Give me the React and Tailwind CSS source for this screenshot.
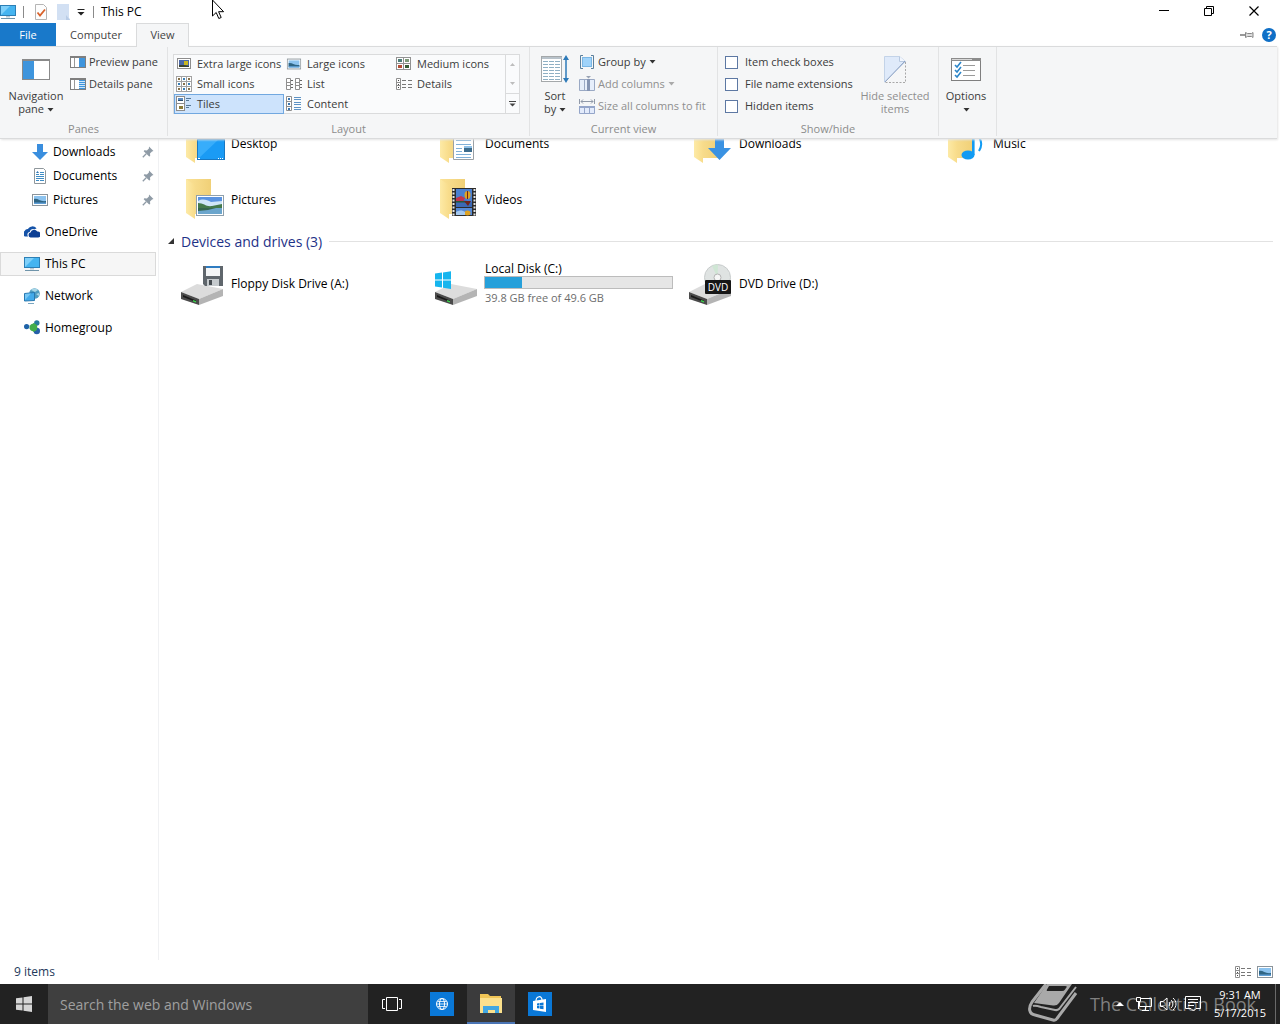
import React, { useState } from "react";

/* ---------- small icons (16px) ---------- */

const Svg = ({ w = 16, h = 16, className = "", children }) => (
  <svg width={w} height={h} viewBox={`0 0 ${w} ${h}`} className={`shrink-0 ${className}`} aria-hidden="true">
    {children}
  </svg>
);

const Caret = ({ color = "#333" }) => (
  <Svg w={7} h={4} className="inline-block align-middle">
    <path d="M0.5 0h6l-3 3.5z" fill={color} />
  </Svg>
);

const PcIcon = () => (
  <Svg>
    <rect x="0.5" y="1.5" width="15" height="10" fill="#45b4f0" stroke="#2c7fb5" />
    <path d="M1 11V2h9z" fill="#7fd0fa" />
    <path d="M6 12h4v1.5H6z" fill="#b9c8d2" />
    <path d="M1 14.5h14" stroke="#6f94aa" />
  </Svg>
);

const DownloadIcon = () => (
  <Svg>
    <path d="M5 0h6v8h5l-8 8-8-8h5z" fill="#3a8ede" />
  </Svg>
);

const DocumentIcon = () => (
  <Svg>
    <path d="M2.5 0.5h9l2 2v13h-11z" fill="#fff" stroke="#8f979c" />
    <path d="M8 4.5h4M4 6.5h3M8 6.5h4M4 8.5h8M4 10.5h8M4 12.5h3M8 12.5h4" stroke="#3f8cc4" />
    <path d="M4 5l1.5-2L7 5z" fill="#2c72b0" />
  </Svg>
);

const PictureIcon = ({ className }) => (
  <Svg className={className}>
    <rect x="0.5" y="2.5" width="15" height="11" fill="#fff" stroke="#8b949b" />
    <rect x="2" y="4" width="12" height="8" fill="#8cc3ef" />
    <path d="M2 7c4-1 6 3 12 2v2H2z" fill="#2f6584" />
    <path d="M2 10.5h12V12H2z" fill="#5f9fd6" />
  </Svg>
);

const OneDriveIcon = () => (
  <Svg>
    <path d="M1 12.500a3 3 0 0 1-.4-5.400A3.500 3.500 0 0 1 4 5a5 5 0 0 1 8.500-.5l-2 .8C8 4.500 6 6 5.800 8 3 8.500 3 11 4 12.500z" fill="#1553a8" />
    <path d="M6.500 13.500a2.500 2.500 0 0 1 0-4.900 3.700 3.700 0 0 1 6.800-1 2.700 2.700 0 0 1 .7 5.900z" fill="#0c3f94" />
  </Svg>
);

const NetworkIcon = () => (
  <Svg>
    <circle cx="10.500" cy="5.500" r="5.300" fill="#4f9cc0" />
    <path d="M7 2c2-2 5-2 7 0l-3 2zM12 6l3-1v3z" fill="#a9d6e6" />
    <path d="M0.500 5.500l10-1v8l-10 .5z" fill="#42aaea" stroke="#2878b0" />
    <path d="M1 12V6l6-.6z" fill="#76c7f5" />
    <path d="M4 15.500h6" stroke="#7aa6c0" />
  </Svg>
);

const HomegroupIcon = () => (
  <Svg>
    <path d="M3 7l9-4M3 7l10 5" stroke="#9cc7d8" strokeWidth="1" />
    <circle cx="12.800" cy="3" r="2.700" fill="#267a9c" />
    <circle cx="12.800" cy="11" r="3.200" fill="#2560a8" />
    <path d="M5.500 7l4-4 3 2v5l-3 2z" fill="#43ad49" />
    <circle cx="9.500" cy="7.500" r="3.800" fill="#43ad49" />
    <circle cx="2.600" cy="6.600" r="2.600" fill="#1e62a8" />
  </Svg>
);

const PushPin = () => (
  <Svg w={12} h={12} className="ml-px">
    <path d="M7 0.500l4.500 4.500-1.500.4-2 2 .2 2.600-1 .5L1.700 5.300l.6-1 2.600.2 2-2z" fill="#8f9ba6" />
    <path d="M4.200 7.800L0.800 11.200" stroke="#8f9ba6" strokeWidth="1.300" />
  </Svg>
);

/* ---------- ribbon icons ---------- */

const NavPaneIcon = () => (
  <Svg w={28} h={28}>
    <rect x="0.5" y="4.500" width="27" height="20" fill="#fff" stroke="#8a8a8a" />
    <path d="M0 4h28v2H0z" fill="#8a8a8a" />
    <path d="M1 6h11v18H1z" fill="#3f95dd" />
  </Svg>
);

const SidePaneIcon = ({ lines }) => (
  <Svg>
    <rect x="0.5" y="2.500" width="15" height="11" fill="#fff" stroke="#7f7f7f" />
    <path d="M0 2h16v2H0z" fill="#7f7f7f" />
    <path d="M4.500 4v9" stroke="#9a9a9a" />
    <path d="M9 4h6v9H9z" fill="#3f95dd" />
    {lines && <path d="M9 5.500h6M9 7.500h6M9 9.500h6M9 11.500h6" stroke="#cfe6f8" />}
  </Svg>
);

const ExtraLargeIcon = () => (
  <Svg>
    <rect x="1.500" y="2.500" width="13" height="10" fill="#fff" stroke="#8d8d8d" />
    <rect x="3" y="4" width="10" height="7" fill="#4a68a8" />
    <path d="M8 5h4v4H8z" fill="#c9b722" />
    <path d="M3 9h5l5 1v1H3z" fill="#3a4230" />
  </Svg>
);

const SmallGridIcon = () => (
  <Svg>
    {[0, 5, 10].map((y) =>
      [0, 5, 10].map((x) => (
        <g key={`${x}-${y}`}>
          <rect x={x + 0.5} y={y + 0.5} width="5" height="5" fill="#fff" stroke="#a2a2a2" />
          <rect x={x + 2} y={y + 2} width="2" height="2" fill={(x + y) % 10 ? "#397eb5" : "#857048"} />
        </g>
      ))
    )}
  </Svg>
);

const TilesIcon = () => (
  <Svg>
    <rect x="0.500" y="0.500" width="8" height="7" fill="#fff" stroke="#8d8d8d" />
    <rect x="0.500" y="7.500" width="8" height="7" fill="#fff" stroke="#8d8d8d" />
    <path d="M2 2h5v3H2z" fill="#5c8bc0" />
    <path d="M2 4h5v1H2z" fill="#2d4f70" />
    <path d="M3 10h4v3H3z" fill="#8a7b38" />
    <path d="M10 2.500h5M10 4.500h3M10 9.500h5M10 11.500h3" stroke="#557896" />
  </Svg>
);

const MediumIcon = () => (
  <Svg>
    {[[1, 2, "#4d7d78"], [8, 2, "#7d9a78"], [1, 8, "#b34c34"], [8, 8, "#355c33"]].map(([x, y, c]) => (
      <g key={`${x}-${y}`}>
        <rect x={x - 0.5} y={y - 0.5} width="7" height="6" fill="#fff" stroke="#929292" />
        <rect x={x + 1} y={y + 1} width="4" height="3" fill={c} />
      </g>
    ))}
  </Svg>
);

const ListIcon = () => (
  <Svg>
    {[0, 9].map((x) => (
      <g key={x}>
        <path d={`M${x + 0.5} 2.500h4v11h-4zM${x} 6.500h5M${x} 9.500h5`} fill="#fff" stroke="#8f8f8f" />
        <path d={`M${x + 5} 4.500h2M${x + 5} 8.500h2M${x + 5} 11.500h2`} stroke="#666" />
      </g>
    ))}
  </Svg>
);

const DetailsIcon = () => (
  <Svg>
    <path d="M0.500 2.500h4v11h-4zM0 6.500h5M0 9.500h5" fill="#fff" stroke="#8f8f8f" />
    <path d="M2 4h1v1H2zM2 8h1v1H2zM2 11h1v1H2z" fill="#444" />
    <path d="M6 4.500h4M6 8.500h4M6 11.500h4M12 4.500h4M12 8.500h4M12 11.500h4" stroke="#777" />
  </Svg>
);

const ContentIcon = () => (
  <Svg>
    <path d="M0.500 0.500h5v14h-5zM0 5.500h6M0 10.500h6" fill="#fff" stroke="#8f8f8f" />
    <path d="M2 2h2v2H2zM2 7h2v2H2zM2 12h2v2H2z" fill="#3a76b0" />
    <path d="M8 1.500h7M8 3.500h7M8 6.500h7M8 8.500h7M8 11.500h7M8 13.500h7" stroke="#5d92c4" />
  </Svg>
);

const SortIcon = () => (
  <Svg w={28} h={28}>
    <rect x="0.500" y="1.500" width="20" height="25" fill="#fff" stroke="#a4a8aa" />
    <path d="M1 2h20v2H1z" fill="#b8c2ca" />
    {[6.5, 9.5, 12.5, 15.5, 18.5, 21.5, 24.5].map((y) => (
      <path key={y} d={`M2 ${y}h5M8 ${y}h5M14 ${y}h5`} stroke="#8fb0c4" />
    ))}
    <path d="M25 3v22" stroke="#2e7ab8" strokeWidth="1.500" />
    <path d="M22 5l3-5 3 5zM22 23l3 5 3-5z" fill="#2e7ab8" />
  </Svg>
);

const GroupIcon = () => (
  <Svg>
    <path d="M4 1.500H1.500v13H4M12 1.500h2.500v13H12" fill="none" stroke="#5b7f9b" />
    <rect x="3.500" y="3.500" width="9" height="9" fill="#9fd3fa" stroke="#7ab6e4" />
  </Svg>
);

const AddColumnsIcon = () => (
  <Svg>
    <path d="M0.500 3.500h15v11h-15zM5.500 3v12M10.500 3v12" fill="#e6eefb" stroke="#9aa9c4" />
    <path d="M8 3h3v12H8z" fill="#8595b4" />
    <path d="M7 0h5L9.500 2.500z" fill="#9aa3b4" />
  </Svg>
);

const SizeColumnsIcon = () => (
  <Svg>
    <path d="M0.500 1v5M15.500 1v5M2 3.500h12M4 1.500l-2 2 2 2M12 1.500l2 2-2 2" fill="none" stroke="#9099a8" />
    <path d="M0.500 8.500h15v7h-15zM5.500 8v8M10.500 8v8" fill="#e3ebfb" stroke="#94a5c9" />
    <path d="M0 8h16v2H0z" fill="#94a5c9" />
  </Svg>
);

const HideIcon = () => (
  <Svg w={28} h={28}>
    <path d="M3.500 1.500h15l6 5L3.500 27z" fill="#dfeafa" stroke="#c3d3e8" />
    <path d="M18.500 1.500v5h6" fill="#f2f6fd" stroke="#b8c9e0" />
    <path d="M24.500 7v20.500H4" fill="none" stroke="#a8a8a8" strokeDasharray="2 1.500" />
    <path d="M4 27L24 6" stroke="#8fa3c4" />
  </Svg>
);

const OptionsIcon = () => (
  <Svg w={30} h={28}>
    <rect x="0.500" y="3.500" width="29" height="22" fill="#fff" stroke="#7f7f7f" />
    <path d="M0 3h30v3H0z" fill="#8c8c8c" />
    <path d="M1 4.500h20" stroke="#d8d8d8" />
    {[10, 15, 20].map((y) => (
      <g key={y} fill="none">
        <path d={`M4 ${y}l2 2 4-5`} stroke="#2d86c9" strokeWidth="1.600" />
        <path d={`M12 ${y + 0.5}h12`} stroke="#9a9a9a" />
      </g>
    ))}
  </Svg>
);

/* ---------- tile icons (48px) ---------- */

const Folder = ({ children }) => (
  <Svg w={48} h={48}>
    <defs>
      <linearGradient id="flap" x1="0" x2="1">
        <stop offset="0" stopColor="#fdeaa6" />
        <stop offset="1" stopColor="#f8dc8a" />
      </linearGradient>
      <linearGradient id="back" x1="0" x2="1">
        <stop offset="0" stopColor="#fbe296" />
        <stop offset="1" stopColor="#f0d077" />
      </linearGradient>
    </defs>
    <path d="M6 3h25v35H15z" fill="url(#back)" />
    <path d="M6 3l9 6v34l-9-6z" fill="url(#flap)" />
    {children}
  </Svg>
);

const DesktopFolder = () => (
  <Folder>
    <rect x="17.500" y="19.500" width="27" height="20" fill="#1a9bf5" stroke="#1778c4" />
    <path d="M18 39V20h20z" fill="#37adfb" />
    <path d="M18 38.500h2M38 38.500h1M40 38.500h1M42 38.500h1" stroke="#fff" />
  </Folder>
);

const DocumentsFolder = () => (
  <Folder>
    <path d="M19.500 12.500h20v27h-20z" fill="#fff" stroke="#9aa0a5" />
    <path d="M22 20.500h15M22 24.500h15M22 28.500h6M22 31.500h6M22 34.500h15M22 37.500h15" stroke="#7fb0d8" />
    <rect x="30" y="26" width="8" height="6" fill="#3d6c8c" />
    <path d="M30 26h8v2h-8z" fill="#8fc1e8" />
  </Folder>
);

const DownloadsFolder = () => (
  <Folder>
    <path d="M27 12h9v16h7L31.500 40 20 28h7z" fill="#3a92e2" />
  </Folder>
);

const MusicFolder = () => (
  <Folder>
    <ellipse cx="26" cy="35" rx="6.500" ry="4.600" fill="#129bf3" />
    <path d="M30 12h2.600v23H30z" fill="#129bf3" />
    <path d="M35 15c5 5 5 11 2 16" fill="none" stroke="#129bf3" strokeWidth="2" />
  </Folder>
);

const PicturesFolder = () => (
  <Folder>
    <rect x="16.500" y="19.500" width="27" height="20" fill="#fff" stroke="#8fa0ac" />
    <rect x="18" y="21" width="24" height="17" fill="#5a93e0" />
    <path d="M18 25c5-3 9-1 13 1l11-1v7H18z" fill="#cfe6f8" />
    <path d="M18 27c6 0 8 4 14 3l10-2v4H18z" fill="#44794b" />
    <path d="M18 32h24v6H18z" fill="#6ba5cc" />
    <path d="M18 32h18l-8 2-10 1z" fill="#35664f" />
  </Folder>
);

const VideosFolder = () => (
  <Folder>
    <rect x="18" y="12" width="24" height="28" fill="#2b2b2b" />
    <path d="M19.500 13v27M40.500 13v27" stroke="#e6e6e6" strokeWidth="2" strokeDasharray="2 1.500" />
    <rect x="22" y="13" width="16" height="18" fill="#4a7fd0" />
    <rect x="22" y="32" width="16" height="7" fill="#5589d6" />
    <path d="M22 25c4-2 8-1 16 1v5H22z" fill="#3b68b4" />
    <path d="M22 22l5-2 4 2-2 4h-7z" fill="#c2334e" />
    <path d="M22 25h14v1.500H22z" fill="#27593a" />
    <ellipse cx="33.500" cy="19" rx="3" ry="4" fill="#e0a321" />
    <path d="M33 15h1v8h-1zM30 25h7l-3 5z" fill="#6f231b" />
    <ellipse cx="33.500" cy="37" rx="3" ry="2.500" fill="#e0a321" />
    <path d="M22 36c4-2 6-2 9 0v3h-9z" fill="#a5c8ee" />
  </Folder>
);

const DriveBase = () => (
  <>
    <path d="M1 32l16-8 26 5-24 10z" fill="#dcdcdc" />
    <path d="M19 39l24-10v7L19 45z" fill="#b4b4b4" />
    <path d="M1 32l18 7v6L1 39z" fill="#4b4b4b" />
    <path d="M3 35l13 5.500v1.500L3 37z" fill="#191919" />
    <path d="M13 40l3 1v1.500l-3-1z" fill="#3dd14c" />
  </>
);

const FloppyDrive = () => (
  <Svg w={48} h={48}>
    <DriveBase />
    <path d="M23 6h20v20H25l-2-2z" fill="#5f666c" />
    <path d="M26 6h14v10H26z" fill="#f3f5f6" />
    <path d="M26 6h14v2H26z" fill="#2e7cc1" />
    <path d="M27 19h12v7H27z" fill="#c5cacd" />
    <path d="M29 20h3v5h-3z" fill="#454b50" />
  </Svg>
);

const LocalDrive = () => (
  <Svg w={48} h={48}>
    <DriveBase />
    <path d="M1 13.500l7-1v7H1zM9 12.400l8-1.200v8.300H9zM1 20.500h7v7l-7-1zM9 20.500h8V29l-8-1.300z" fill="#16b5ee" />
  </Svg>
);

const DvdDrive = () => (
  <Svg w={48} h={48}>
    <DriveBase />
    <circle cx="29.500" cy="17.500" r="13" fill="#dfe3e2" stroke="#c8cccc" />
    <path d="M29.500 17.500L24 6a13 13 0 0 1 6-1.500z" fill="#cfe6d4" />
    <circle cx="29.500" cy="17.500" r="3.500" fill="#f6f6f6" stroke="#b4b4b4" />
    <rect x="17" y="20" width="26" height="14" rx="1" fill="#161616" />
    <text x="30" y="31" fill="#fff" fontSize="10" textAnchor="middle" fontFamily="Open Sans">DVD</text>
  </Svg>
);

/* ---------- data ---------- */

const layouts = [
  { name: "Extra large icons", icon: <ExtraLargeIcon /> },
  { name: "Large icons", icon: <PictureIcon className="scale-90" /> },
  { name: "Medium icons", icon: <MediumIcon /> },
  { name: "Small icons", icon: <SmallGridIcon /> },
  { name: "List", icon: <ListIcon /> },
  { name: "Details", icon: <DetailsIcon /> },
  { name: "Tiles", icon: <TilesIcon /> },
  { name: "Content", icon: <ContentIcon /> },
];

const folders = [
  { name: "Desktop", icon: <DesktopFolder /> },
  { name: "Documents", icon: <DocumentsFolder /> },
  { name: "Downloads", icon: <DownloadsFolder /> },
  { name: "Music", icon: <MusicFolder /> },
  { name: "Pictures", icon: <PicturesFolder /> },
  { name: "Videos", icon: <VideosFolder /> },
];

const quickLinks = [
  { name: "Downloads", icon: <DownloadIcon /> },
  { name: "Documents", icon: <DocumentIcon /> },
  { name: "Pictures", icon: <PictureIcon /> },
];

const places = [
  { name: "OneDrive", icon: <OneDriveIcon /> },
  { name: "This PC", icon: <PcIcon />, active: true },
  { name: "Network", icon: <NetworkIcon /> },
  { name: "Homegroup", icon: <HomegroupIcon /> },
];

/* ---------- window chrome ---------- */

const TitleBar = () => (
  <header className="flex h-[23px] items-center justify-between">
    <div className="flex items-center">
      <PcIcon />
      <span className="ml-[7px] h-3 w-px bg-[#8a8a8a]" />
      <button aria-label="Properties" className="ml-[9px]">
        <Svg>
          <path d="M2.500 0.500h8l3 3v12h-11z" fill="#fdfdfd" stroke="#b5b5b5" />
          <path d="M4.500 8.500l2.500 3 5-6" fill="none" stroke="#d9622b" strokeWidth="1.800" />
        </Svg>
      </button>
      <button aria-label="New folder" className="ml-[7px]">
        <Svg>
          <path d="M1 0h12v14l1 1v1H1z" fill="#d2e0f3" />
          <path d="M10 11l4 5h-4z" fill="#b9cce6" />
        </Svg>
      </button>
      <button aria-label="Customize" className="ml-[5px]">
        <Svg w={8} h={8}>
          <path d="M0.500 1.500h7" stroke="#222" />
          <path d="M0.500 4h7L4 7.500z" fill="#222" />
        </Svg>
      </button>
      <span className="ml-2 h-3 w-px bg-[#8a8a8a]" />
      <h1 className="ml-[7px] text-[12px]">This PC</h1>
    </div>
    <div className="flex pr-[3px]">
      <button aria-label="Minimize" className="flex h-5 w-[45px] items-center justify-center">
        <Svg w={11} h={11}><path d="M0 4.500h10" stroke="#000" /></Svg>
      </button>
      <button aria-label="Restore" className="flex h-5 w-[45px] items-center justify-center">
        <Svg w={11} h={11}>
          <path d="M0.500 2.500h7v7h-7zM2.500 2.500v-2h7v7h-2" fill="none" stroke="#000" />
        </Svg>
      </button>
      <button aria-label="Close" className="flex h-5 w-[45px] items-center justify-center">
        <Svg w={11} h={11}><path d="M0.500 0.500l9 9M9.500 0.500l-9 9" stroke="#000" strokeWidth="1.200" /></Svg>
      </button>
    </div>
  </header>
);

const Tabs = () => (
  <nav className="relative z-20 flex h-[23px] items-start justify-between text-[11px] text-[#444]">
    <div className="flex">
      <button className="h-[23px] w-14 bg-[#1979ca] pt-px text-white">File</button>
      <button className="h-[23px] w-20 pt-px">Computer</button>
      <button className="h-6 w-[53px] border border-b-0 border-[#dadbdc] bg-[#f5f6f7]">View</button>
    </div>
    <div className="flex h-[23px] items-center gap-2 pr-1">
      <button aria-label="Pin the ribbon">
        <Svg w={14} h={8}>
          <path d="M0 4h5" stroke="#777" strokeWidth="1.500" />
          <path d="M5.500 1.500l2 1h4l1.500-1v5l-1.500-1h-4l-2 1z" fill="#ddd" stroke="#888" />
        </Svg>
      </button>
      <button aria-label="Help" className="h-[14px] w-[14px] rounded-full bg-[#0f6fc6] text-[11px] leading-[14px] font-bold text-white">?</button>
    </div>
  </nav>
);

/* ---------- ribbon ---------- */

const RibbonGroup = ({ label, className, children }) => (
  <section className={`flex flex-col border-r border-[#e2e3e4] ${className}`}>
    <div className="flex h-[75px]">{children}</div>
    <div className="h-[14px] text-center leading-[14px] text-[#8c8c8c]">{label}</div>
  </section>
);

const BigButton = ({ icon, className = "", children, ...rest }) => (
  <button className={`flex flex-col items-center pt-2 leading-[13px] ${className}`} {...rest}>
    {icon}
    <span className="mt-[6px]">{children}</span>
  </button>
);

const SmallButton = ({ icon, children, ...rest }) => (
  <button className="flex h-[22px] items-center gap-[3px] whitespace-nowrap disabled:text-[#8f8f8f]" {...rest}>
    {icon}
    {children}
  </button>
);

const CheckOption = ({ label }) => (
  <label className="flex h-[22px] items-center gap-[7px] whitespace-nowrap">
    <input type="checkbox" className="h-[13px] w-[13px] appearance-none border border-[#5d78a3] bg-white checked:bg-[#5d78a3]" />
    {label}
  </label>
);

const Ribbon = () => {
  const [layout, setLayout] = useState("Tiles");

  return (
    <div className="relative z-10 mr-[3px] flex border-y border-[#dadbdc] bg-[#f5f6f7] pb-[2px] text-[11px] text-[#3b3b3b] shadow-[1px_1px_2px_#e4e4e4]">
      <RibbonGroup label="Panes" className="w-[168px]">
        <BigButton icon={<NavPaneIcon />} className="ml-1 w-16">
          Navigation<br />pane <Caret />
        </BigButton>
        <div className="ml-[2px] pt-1">
          <SmallButton icon={<SidePaneIcon />}>Preview pane</SmallButton>
          <SmallButton icon={<SidePaneIcon lines />}>Details pane</SmallButton>
        </div>
      </RibbonGroup>

      <RibbonGroup label="Layout" className="w-[362px]">
        <div className="mt-[7px] ml-[5px] flex h-[60px] bg-[#fafbfc] pl-px shadow-[inset_0_0_0_1px_#dadbdc]">
          <div className="grid grid-cols-[110px_110px_111px] grid-rows-[20px_20px_20px]">
            {layouts.map((item) => (
              <button
                key={item.name}
                onClick={() => setLayout(item.name)}
                className={`flex items-center gap-[5px] whitespace-nowrap border pl-px ${
                  layout === item.name ? "border-[#71a8e0] bg-[#cde3fc]" : "border-transparent"
                }`}
              >
                {item.icon}
                {item.name}
              </button>
            ))}
          </div>
          <div className="flex w-[15px] flex-col border border-[#dadbdc]">
            <button aria-label="Scroll up" className="flex flex-1 items-center justify-center">
              <Svg w={5} h={3}><path d="M0 3h5L2.500 0z" fill="#bdbdbd" /></Svg>
            </button>
            <button aria-label="Scroll down" className="flex flex-1 items-center justify-center">
              <Svg w={5} h={3}><path d="M0 0h5L2.500 3z" fill="#bdbdbd" /></Svg>
            </button>
            <button aria-label="More layouts" className="flex flex-1 items-center justify-center border-t border-[#dadbdc]">
              <Svg w={7} h={6}><path d="M0 0.500h7" stroke="#444" /><path d="M0.500 2.500h6l-3 3z" fill="#444" /></Svg>
            </button>
          </div>
        </div>
      </RibbonGroup>

      <RibbonGroup label="Current view" className="w-[188px]">
        <BigButton icon={<SortIcon />} className="ml-[5px] w-10">
          Sort<br />by <Caret />
        </BigButton>
        <div className="ml-1 pt-1">
          <SmallButton icon={<GroupIcon />}>Group by <Caret /></SmallButton>
          <SmallButton icon={<AddColumnsIcon />} disabled>Add columns <Caret color="#aaa" /></SmallButton>
          <SmallButton icon={<SizeColumnsIcon />} disabled>Size all columns to fit</SmallButton>
        </div>
      </RibbonGroup>

      <RibbonGroup label="Show/hide" className="w-[221px]">
        <div className="ml-[7px] w-[130px] pt-1">
          <CheckOption label="Item check boxes" />
          <CheckOption label="File name extensions" />
          <CheckOption label="Hidden items" />
        </div>
        <BigButton icon={<HideIcon />} className="w-20 text-[#8f8f8f]" disabled>
          Hide selected<br />items
        </BigButton>
      </RibbonGroup>

      <RibbonGroup className="w-[58px]">
        <BigButton icon={<OptionsIcon />} className="w-[54px]">
          Options<br /><Caret />
        </BigButton>
      </RibbonGroup>
    </div>
  );
};

/* ---------- explorer body ---------- */

const Sidebar = () => (
  <aside className="w-[159px] shrink-0 border-r border-[#f0f1f3] pt-px">
    <ul>
      {quickLinks.map((link) => (
        <li key={link.name}>
          <a href="#" className="flex h-6 items-center gap-[5px] pr-1 pl-8">
            {link.icon}
            <span className="flex-1">{link.name}</span>
            <PushPin />
          </a>
        </li>
      ))}
    </ul>
    <ul className="mt-2 flex flex-col gap-2">
      {places.map((place) => (
        <li key={place.name}>
          <a
            href="#"
            className={`mr-[2px] flex h-6 items-center gap-[5px] border pl-[23px] ${
              place.active ? "border-[#dadada] bg-[#f6f6f6]" : "border-transparent"
            }`}
          >
            {place.icon}
            {place.name}
          </a>
        </li>
      ))}
    </ul>
  </aside>
);

const Tile = ({ icon, children }) => (
  <li className="flex h-14 items-center gap-[3px]">
    {icon}
    <div>{children}</div>
  </li>
);

const DriveUsage = ({ used }) => (
  <div className="-ml-px h-[13px] w-[189px] border border-[#bcbcbc] bg-[#e6e6e6]" role="progressbar" aria-label="Used space" aria-valuenow={used}>
    <div className="h-full bg-[#26a0da]" style={{ width: `${used}%` }} />
  </div>
);

const Files = () => (
  <main className="min-w-0 flex-1 overflow-hidden pr-[7px] pl-[9px]">
    {/* list is scrolled down a little, first row sits partly under the ribbon */}
    <ul className="-mt-[23px] grid grid-cols-[repeat(auto-fill,254px)] pl-3">
      {folders.map((f) => (
        <Tile key={f.name} icon={f.icon}>{f.name}</Tile>
      ))}
    </ul>
    <div className="mb-[2px] flex h-[26px] items-center">
      <Svg w={6} h={6}><path d="M6 0v6H0z" fill="#333" /></Svg>
      <h2 className="ml-[7px] text-[14px] text-[#1e3287]">Devices and drives (3)</h2>
      <span className="ml-[7px] h-px flex-1 bg-[#e2e2e2]" />
    </div>
    <ul className="grid grid-cols-[repeat(auto-fill,254px)] pl-3">
      <Tile icon={<FloppyDrive />}>Floppy Disk Drive (A:)</Tile>
      <Tile icon={<LocalDrive />}>
        <div className="leading-[15px]">Local Disk (C:)</div>
        <DriveUsage used={20} />
        <div className="text-[11px] leading-[18px] text-[#6d6d6d]">39.8 GB free of 49.6 GB</div>
      </Tile>
      <Tile icon={<DvdDrive />}>DVD Drive (D:)</Tile>
    </ul>
  </main>
);

const StatusBar = () => (
  <footer className="flex h-6 items-center justify-between pr-[7px] pl-[14px] text-[#1e395b]">
    <span>9 items</span>
    <div className="flex gap-[6px]">
      <button aria-label="Details view"><DetailsIcon /></button>
      <button aria-label="Large icons view"><PictureIcon /></button>
    </div>
  </footer>
);

/* ---------- taskbar ---------- */

const Watermark = () => (
  <div className="pointer-events-none absolute top-0 right-6 flex h-10 items-center gap-3 text-[18px] text-[#808080]">
    <svg width="50" height="40" viewBox="0 0 50 40" aria-hidden="true">
      <path d="M19 0h25L31 19q-2 3-6 2.500L6 19z" fill="#a9a9a9" />
      <path d="M21 2h16q3 0 1 2l-1 1.500q-1 1.500-3 1.500H20q-2 0-1-1.500z" fill="#222" />
      <path d="M18 0L4 18c-4 6-3 12 3 13l18 5c2 .6 3 0 4-1.500L48 9" fill="none" stroke="#a9a9a9" strokeWidth="3" strokeLinejoin="round" />
      <path d="M5 22c2-1 5 0 8 1l14 3c2 .4 3 0 4-1L48 3" fill="none" stroke="#a9a9a9" strokeWidth="2" />
    </svg>
    The Collection Book
  </div>
);

const Taskbar = () => (
  <div className="relative flex h-10 items-center bg-[#222] text-white">
    <button aria-label="Start" className="flex h-10 w-12 items-center justify-center">
      <Svg>
        <path d="M0 2.300l6.500-.9v6.100H0zM7.500 1.200L16 0v7.500H7.500zM0 8.500h6.500v6.100L0 13.700zM7.500 8.500H16V16l-8.500-1.200z" fill="#d6d6d6" />
      </Svg>
    </button>
    <input
      type="text"
      aria-label="Search"
      placeholder="Search the web and Windows"
      className="h-10 w-80 bg-[#3f3f3f] px-3 text-[14px] outline-none placeholder:text-[#a0a0a0]"
    />
    <button aria-label="Task view" className="flex h-10 w-12 items-center justify-center">
      <Svg w={20} h={14}>
        <path d="M4.500 0.500h11v13h-11zM3 2.500H0.500v9H3M17 2.500h2.500v9H17" fill="none" stroke="#fff" />
      </Svg>
    </button>
    <button aria-label="Browser" className="flex h-10 w-[51px] items-center justify-center">
      <Svg w={24} h={24}>
        <rect width="24" height="24" fill="#0a78d7" />
        <g fill="none" stroke="#fff">
          <circle cx="12" cy="12" r="5.500" />
          <ellipse cx="12" cy="12" rx="2.500" ry="5.500" />
          <path d="M6.500 12h11M7.500 9.500h9M7.500 14.500h9" strokeWidth="0.800" />
        </g>
      </Svg>
    </button>
    <button aria-label="File Explorer" className="flex h-10 w-12 items-center justify-center border-b-2 border-[#4a74b4] bg-[#3b3b3c] pt-[2px]">
      <Svg w={22} h={20}>
        <path d="M0 0h8l2 2h11v17H0z" fill="#f0c556" />
        <path d="M0 4h22v15H0z" fill="#fbe08c" />
        <path d="M3 19v-7h16v7h-4v-3H8v3z" fill="#41a7e2" />
      </Svg>
    </button>
    <button aria-label="Store" className="flex h-10 w-[50px] items-center justify-center">
      <Svg w={24} h={24}>
        <rect width="24" height="24" fill="#0a78d7" />
        <path d="M5 9l13-2v13L5 18z" fill="#fff" />
        <path d="M8 9c0-5 6-6 6-1" fill="none" stroke="#fff" strokeWidth="1.200" />
        <path d="M9 11.500l2.500-.4v2.500H9zM12 11l3.500-.5v3.100H12zM9 14.100h2.500v2.500L9 16.200zM12 14.100h3.500v3.100L12 16.700z" fill="#0a78d7" />
      </Svg>
    </button>

    <Watermark />

    <div className="relative ml-auto flex h-10 items-center">
      <button aria-label="Show hidden icons" className="mr-3">
        <Svg w={8} h={4}><path d="M0 4h8L4 0z" fill="#fff" /></Svg>
      </button>
      <button aria-label="Network" className="mr-2">
        <Svg>
          <path d="M3.500 2.500h12v8h-12zM9.500 11v3M6 14.500h7" fill="none" stroke="#fff" />
          <path d="M0.500 1.500h4v4h-4zM2.500 6v7" fill="#222" stroke="#fff" />
        </Svg>
      </button>
      <button aria-label="Volume" className="mr-2">
        <Svg w={17} h={16}>
          <g fill="none" stroke="#fff">
            <path d="M0.500 5.500H3l4-3.500v12L3 10.500H0.500z" />
            <path d="M9 6c1 1 1 3 0 4M11 4c2.500 2 2.500 6 0 8M13 2c4 3.500 4 8.500 0 12" />
          </g>
        </Svg>
      </button>
      <button aria-label="Notifications">
        <Svg>
          <path d="M0.500 0.500h15v12H11L8.500 15 6 12.500H0.500zM3 3.500h10M3 6.500h10M3 9.500h6" fill="none" stroke="#fff" />
        </Svg>
      </button>
      <div className="w-[74px] pl-1 text-center text-[11px] leading-[18px]">
        9:31 AM<br />5/17/2015
      </div>
      <button aria-label="Show desktop" className="h-10 w-[5px] border-l border-[#6a6a6a]" />
    </div>
  </div>
);

const MousePointer = () => (
  <svg width="12" height="20" viewBox="0 0 12 20" className="pointer-events-none absolute top-0 left-[212px] z-30" aria-hidden="true">
    <path d="M0.500 0v16l3.700-3.500 2.600 6 2.400-1-2.600-5.800h5z" fill="#fff" stroke="#000" />
  </svg>
);

export default function App() {
  return (
    <div className="relative flex h-screen flex-col overflow-hidden bg-white font-['Open_Sans','Noto_Sans',sans-serif] text-[12px] text-black">
      <TitleBar />
      <Tabs />
      <Ribbon />
      <div className="flex min-h-0 flex-1">
        <Sidebar />
        <Files />
      </div>
      <StatusBar />
      <Taskbar />
      <MousePointer />
    </div>
  );
}
